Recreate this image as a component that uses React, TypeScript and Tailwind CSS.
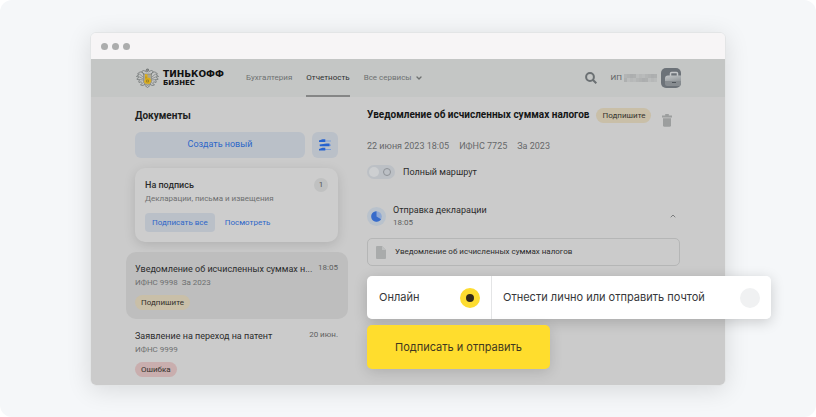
import React from 'react';
import { ChevronDown, ChevronUp } from 'lucide-react';

function Emblem() {
  return (
    <svg viewBox="0 0 46 40" className="h-5 w-[23px] shrink-0" fill="none" aria-hidden="true">
      <g stroke="#6f7373" strokeWidth="1.6" strokeLinecap="round" strokeLinejoin="round">
        <path d="M20 5l1.5-3h3L26 5l-3 2z" fill="#8b8e8d" />
        <path d="M20 8c-3-4-8-4-8 0 0 3 4 3 5 6M26 8c3-4 8-4 8 0 0 3-4 3-5 6" />
        <path d="M16 12C12 5 6 8 3 12c2 0 3 1 3 2-2 0-4 1-5 3 3 0 4 1 4 2-2 1-3 2-3 4 3-1 4 0 5 1-1 1-2 3-1 5 3-2 5-1 6 0" />
        <path d="M30 12c4-7 10-4 13 0-2 0-3 1-3 2 2 0 4 1 5 3-3 0-4 1-4 2 2 1 3 2 3 4-3-1-4 0-5 1 1 1 2 3 1 5-3-2-5-1-6 0" />
        <path d="M7 12l7 6M5 17l8 4M6 23l8 1M39 12l-7 6M41 17l-8 4M40 23l-8 1" strokeWidth="1.2" />
        <path d="M13 30l-4 4 5 1 4-3M33 30l4 4-5 1-4-3M18 35l5 4 5-4" />
      </g>
      <path d="M15 12h16v15c0 4-4 6-8 8-4-2-8-4-8-8z" fill="#aaa795" stroke="#6f7373" strokeWidth="1" />
      <path d="M18 12l5 1v6l5 1 3 6-4 6-9-1-2-4 2-4z" fill="#dcae1c" />
      <path d="M21 24h4v4h-4zM20 17v4" stroke="#857028" strokeWidth="1.2" />
    </svg>
  );
}

function SearchIcon() {
  return (
    <svg viewBox="0 0 12 12" className="size-3" fill="none" stroke="#6b7073" strokeWidth="2" aria-hidden="true">
      <circle cx="5" cy="5" r="3.9" />
      <path d="M8 8l3.3 3.3" />
    </svg>
  );
}

function MaskedName() {
  const shades = ['#b3b5b5', '#aeb0b0', '#b9bbbb', '#acaeaf', '#b6b8b8', '#b0b2b2', '#bbbdbd'];
  const cells = Array.from({ length: 22 }, (_, i) => i);
  return (
    <svg viewBox="0 0 33 8" className="h-2 w-[33px]" aria-hidden="true">
      {cells.map((i) => (
        <rect key={i} x={(i % 11) * 3} y={i < 11 ? 0 : 4} width="3" height="4" fill={shades[(i * 5 + (i > 10 ? 2 : 0)) % 7]} />
      ))}
    </svg>
  );
}

function CaseIcon() {
  return (
    <svg viewBox="0 0 20 20" className="size-5" aria-hidden="true">
      <defs>
        <linearGradient id="case" x1="0" y1="0" x2="0.6" y2="1">
          <stop offset="0" stopColor="#c3c6c8" />
          <stop offset="1" stopColor="#979c9f" />
        </linearGradient>
        <clipPath id="tile">
          <rect width="20" height="20" rx="5" />
        </clipPath>
      </defs>
      <g clipPath="url(#tile)">
        <rect width="20" height="20" fill="#6c7278" />
        <path d="M9.5 8V5.500q0-1 1-1h5q1 0 1 1V8" fill="none" stroke="#c5c8ca" strokeWidth="1.500" />
        <path d="M4 10.500q0-3 3-3h13v6H4z" fill="url(#case)" />
        <path d="M4 13h16v5H6q-2 0-2-2z" fill="#878c90" />
        <path d="M11 14.500h4" stroke="#4f555a" strokeWidth="1.200" />
      </g>
    </svg>
  );
}

function FilterIcon() {
  return (
    <svg viewBox="0 0 14 14" className="size-3.5" aria-hidden="true">
      <path d="M1 3h12M1 7.200h12M1 11.500h12" stroke="#7d9dd6" strokeWidth="1.200" />
      <path
        d="M1 2.500L4.500 1.200H7.300V4H1zM2 6.500L8.500 5.500H11.500V8.200H2zM1 11L4.500 9.800H7.300V12.500H1z"
        fill="#2763cf"
      />
    </svg>
  );
}

function TrashIcon() {
  return (
    <svg viewBox="0 0 10 13" className="h-[13px] w-2.5" fill="#9c9e9e" aria-hidden="true">
      <path d="M3.200 0h3.600v1.600H10v1.800H0V1.600h3.200z" />
      <path d="M1 4.200h8v7q0 1.500-1.500 1.500h-5Q1 12.700 1 11.200z" />
    </svg>
  );
}

function FileIcon() {
  return (
    <svg viewBox="0 0 10 13" className="h-[13px] w-2.5" aria-hidden="true">
      <path d="M1 0h5l4 4v8q0 1-1 1H1q-1 0-1-1V1q0-1 1-1z" fill="#a9abab" />
      <path d="M6 0l4 4H6z" fill="#bdbfbf" />
    </svg>
  );
}

function ProgressIcon() {
  return (
    <svg viewBox="0 0 19 19" className="size-[19px] shrink-0" aria-hidden="true">
      <circle cx="9.500" cy="9.500" r="9.500" fill="#b9c2cc" />
      <circle cx="9.500" cy="9.500" r="5.300" fill="#8ea8d4" />
      <path d="M9.500 4.200v5.300l4.600 2.700A5.300 5.300 0 1 1 9.500 4.200z" fill="#376bca" />
    </svg>
  );
}

function Tag({ tone, children }: { tone: 'sand' | 'rose'; children: React.ReactNode }) {
  return (
    <span
      className={
        'inline-flex h-[15px] items-center rounded-full px-1.5 text-[8px] leading-3 text-[#33312c] ' +
        (tone === 'sand' ? 'bg-[#c9bfa8]' : 'bg-[#c9aeae]')
      }
    >
      {children}
    </span>
  );
}

type Doc = { title: string; date: string; meta: string; tag: string; tone: 'sand' | 'rose'; active: boolean };

const docs: Doc[] = [
  {
    title: 'Уведомление об исчисленных суммах н...',
    date: '18:05',
    meta: 'ИФНС 9998  За 2023',
    tag: 'Подпишите',
    tone: 'sand',
    active: true,
  },
  { title: 'Заявление на переход на патент', date: '20 июн.', meta: 'ИФНС 9999', tag: 'Ошибка', tone: 'rose', active: false },
];

function Header() {
  return (
    <header className="flex h-[38px] items-center bg-[#c4c6c5] pr-11 pl-[45px]">
      <a href="#" className="flex items-center gap-1 text-[#111]">
        <Emblem />
        <span className="flex flex-col font-['DejaVu_Sans',sans-serif] font-bold">
          <span className="text-[9px] leading-[10px]">ТИНЬКОФФ</span>
          <span className="text-[7px] leading-[8px]">БИЗНЕС</span>
        </span>
      </a>
      <nav className="ml-[22px] flex h-full items-center gap-3.5 text-[8px] text-[#6e7171]">
        <a href="#">Бухгалтерия</a>
        <a href="#" className="flex h-full items-center border-y-2 border-t-transparent border-b-[#858686] text-[#2f3131]">
          Отчетность
        </a>
        <a href="#" className="flex items-center gap-[3px]">
          Все сервисы
          <ChevronDown className="size-2" strokeWidth={4} />
        </a>
      </nav>
      <div className="ml-auto flex items-center">
        <button type="button" aria-label="Поиск">
          <SearchIcon />
        </button>
        <span className="ml-3.5 text-[8px] text-[#5f6364]">ИП</span>
        <span className="ml-0.5">
          <MaskedName />
        </span>
        <button type="button" aria-label="Профиль" className="ml-1">
          <CaseIcon />
        </button>
      </div>
    </header>
  );
}

function Sidebar() {
  return (
    <aside className="w-[222px] shrink-0 pt-[11px]">
      <div className="pr-2.5 pl-[9px]">
        <h2 className="text-[10px] leading-4 font-bold text-[#1d1e1e]">Документы</h2>
        <div className="mt-2 flex gap-[7px]">
          <button type="button" className="h-[26px] flex-1 rounded-md bg-[#bac0c8] text-[9px] text-[#2d67c9]">
            Создать новый
          </button>
          <button
            type="button"
            aria-label="Фильтры"
            className="flex size-[26px] items-center justify-center rounded-md bg-[#bac0c8]"
          >
            <FilterIcon />
          </button>
        </div>
        <section className="mt-2.5 rounded-[10px] bg-[#cdcdcd] p-2.5 shadow-[0_3px_12px_rgba(0,0,0,0.13)]">
          <div className="flex items-center justify-between">
            <h3 className="text-[9px] leading-[14px] font-medium text-[#2b2c2c]">На подпись</h3>
            <span className="flex size-3.5 items-center justify-center rounded-full bg-[#c0c1c1] text-[8px] text-[#555]">1</span>
          </div>
          <p className="text-[8px] leading-[14px] text-[#6d6f70]">Декларации, письма и извещения</p>
          <div className="mt-[7px] flex gap-[3px] text-[8px] text-[#2d67c9]">
            <button type="button" className="h-[19px] rounded bg-[#bac0c8] px-[7px]">
              Подписать все
            </button>
            <button type="button" className="h-[19px] px-[7px]">
              Посмотреть
            </button>
          </div>
        </section>
      </div>
      <ul className="mt-2.5">
        {docs.map((doc) => (
          <li
            key={doc.title}
            className={'rounded-[10px] pt-2.5 pr-2.5 pl-[9px] ' + (doc.active ? 'bg-[#bebebe] pb-[9px]' : 'pb-2')}
          >
            <div className="flex justify-between">
              <a href="#" className="text-[9px] leading-[14px] whitespace-nowrap text-[#2b2c2c]">
                {doc.title}
              </a>
              <time className="text-[8px] leading-3 text-[#5d5f60]">{doc.date}</time>
            </div>
            <p className="text-[8px] leading-[14px] whitespace-pre text-[#6d6f70]">{doc.meta}</p>
            <div className="mt-[5px] flex">
              <Tag tone={doc.tone}>{doc.tag}</Tag>
            </div>
          </li>
        ))}
      </ul>
    </aside>
  );
}

function Details() {
  return (
    <main className="ml-[19px] min-w-0 flex-1 pt-[11px] pb-4">
      <div className="flex h-[15px] items-start">
        <h1 className="mr-[7px] text-[10px] leading-[14px] font-bold whitespace-nowrap text-[#151616]">
          Уведомление об исчисленных суммах налогов
        </h1>
        <Tag tone="sand">Подпишите</Tag>
        <button type="button" aria-label="Удалить" className="mt-1.5 mr-2 ml-auto">
          <TrashIcon />
        </button>
      </div>
      <p className="mt-4 flex gap-2.5 text-[9px] leading-[14px] text-[#66686a]">
        <span>22 июня 2023 18:05</span>
        <span>ИФНС 7725</span>
        <span>За 2023</span>
      </p>
      <label className="mt-3 flex h-3.5 items-center gap-2 text-[9px] leading-4 text-[#2b2c2c]">
        <input
          type="checkbox"
          className="flex h-3.5 w-7 appearance-none items-center justify-between rounded-full bg-[#bcc0c5] px-0.5 before:size-2.5 before:rounded-full before:bg-[#cdcfd1] after:mr-0.5 after:size-2 after:rounded-full after:border after:border-[#8e9297]"
        />
        Полный маршрут
      </label>
      <section className="mt-6 flex items-center gap-[7px]">
        <ProgressIcon />
        <div>
          <h2 className="text-[9px] leading-[14px] text-[#2b2c2c]">Отправка декларации</h2>
          <p className="text-[8px] leading-3 text-[#5d5f60]">18:05</p>
        </div>
        <button type="button" aria-label="Свернуть" className="mr-[3px] ml-auto">
          <ChevronUp className="size-2 text-[#7b7d7e]" strokeWidth={3} />
        </button>
      </section>
      <a
        href="#"
        className="mt-[9px] flex h-7 items-center gap-[9px] rounded-[5px] border border-[#b5b6b6] px-2 text-[8px] text-[#2b2c2c]"
      >
        <FileIcon />
        Уведомление об исчисленных суммах налогов
      </a>
      <fieldset className="relative mt-2.5 -mr-[91px] flex h-[43px] rounded-[5px] bg-white font-['Inter','Liberation_Sans',sans-serif] text-[11px] text-[#36373a] shadow-[0_3px_14px_rgba(0,0,0,0.18)]">
        <label className="flex w-[125px] items-center justify-between border-r border-[#e4e5e6] pr-[11px] pl-3">
          Онлайн
          <input
            type="radio"
            name="delivery"
            defaultChecked
            className="size-5 appearance-none rounded-full bg-[#f0f1f2] checked:border-6 checked:border-[#fddc30] checked:bg-[#33291a]"
          />
        </label>
        <label className="flex flex-1 items-center justify-between px-[11px]">
          Отнести лично или отправить почтой
          <input
            type="radio"
            name="delivery"
            className="size-5 appearance-none rounded-full bg-[#f0f1f2] checked:border-6 checked:border-[#fddc30] checked:bg-[#33291a]"
          />
        </label>
      </fieldset>
      <button
        type="button"
        className="relative mt-1.5 block h-11 rounded-[5px] bg-[#ffdd2d] px-7 font-['Inter','Liberation_Sans',sans-serif] text-[11px] text-[#3f3820] shadow-[0_3px_14px_rgba(0,0,0,0.14)]"
      >
        Подписать и отправить
      </button>
    </main>
  );
}

export default function App() {
  return (
    <div className="bg-white">
      <div className="min-h-screen rounded-xl bg-[#f5f7f9] px-[90px] pt-8 pb-[30px] font-['Roboto','Liberation_Sans',sans-serif]">
        <div className="rounded-md border border-[#e3e5e6] shadow-[0_4px_24px_rgba(0,0,0,0.12)]">
          <div className="flex h-[26px] items-center gap-1 rounded-t-[5px] bg-[#f7f5f6] px-2.5">
            <span className="size-[7px] rounded-full bg-[#acadad]" />
            <span className="size-[7px] rounded-full bg-[#acadad]" />
            <span className="size-[7px] rounded-full bg-[#acadad]" />
          </div>
          <Header />
          <div className="flex rounded-b-[5px] bg-[#cbcbcb] pr-[45px] pl-[35px]">
            <Sidebar />
            <Details />
          </div>
        </div>
      </div>
    </div>
  );
}
